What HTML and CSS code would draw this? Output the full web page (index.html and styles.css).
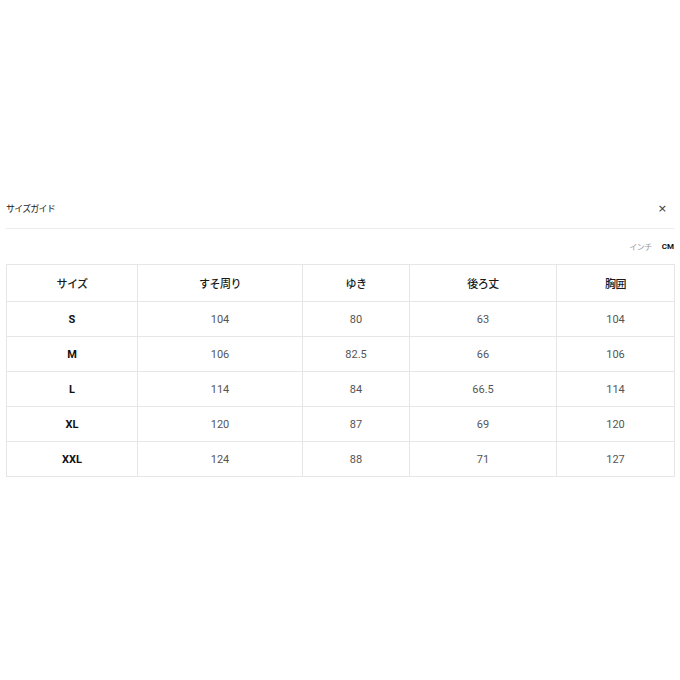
FILE: index.html
```html
<!DOCTYPE html>
<html lang="ja">
<head>
<meta charset="utf-8">
<link rel="stylesheet" href="styles.css">
</head>
<body>
<div class="guide">
  <div class="head">
    <span class="title">サイズガイド</span>
    <span class="close">×</span>
  </div>
  <div class="units">
    <span class="unit">インチ</span>
    <span class="unit active">CM</span>
  </div>
  <table class="sizes">
    <colgroup>
      <col class="c1"><col class="c2"><col class="c3"><col class="c4"><col class="c5">
    </colgroup>
    <thead>
      <tr><th>サイズ</th><th>すそ周り</th><th>ゆき</th><th>後ろ丈</th><th>胸囲</th></tr>
    </thead>
    <tbody>
      <tr><td class="sz">S</td><td>104</td><td>80</td><td>63</td><td>104</td></tr>
      <tr><td class="sz">M</td><td>106</td><td>82.5</td><td>66</td><td>106</td></tr>
      <tr><td class="sz">L</td><td>114</td><td>84</td><td>66.5</td><td>114</td></tr>
      <tr><td class="sz">XL</td><td>120</td><td>87</td><td>69</td><td>120</td></tr>
      <tr><td class="sz">XXL</td><td>124</td><td>88</td><td>71</td><td>127</td></tr>
    </tbody>
  </table>
</div>
</body>
</html>
```

FILE: styles.css
```css
html, body {
  margin: 0;
  padding: 0;
  background: #fff;
}
body {
  font-family: Roboto, "Noto Sans CJK JP", sans-serif;
  color: #222;
}
.guide {
  padding: 198px 6px 0 6px;
}
.head {
  display: flex;
  justify-content: space-between;
  align-items: center;
  height: 20px;
  padding-bottom: 10px;
  border-bottom: 1px solid #ececec;
}
.title {
  font-family: "Noto Sans CJK JP", sans-serif;
  font-size: 9px;
  letter-spacing: -0.8px;
  color: #222;
}
.close {
  font-family: "DejaVu Sans", sans-serif;
  font-size: 11px;
  color: #333;
  margin-right: 7px;
}
.units {
  display: flex;
  justify-content: flex-end;
  align-items: center;
  gap: 10px;
  height: 12px;
  margin-top: 11px;
  margin-bottom: 12px;
}
.unit {
  font-family: "Noto Sans CJK JP", sans-serif;
  font-size: 8px;
  color: #999;
  letter-spacing: -0.5px;
}
.unit.active {
  font-family: Roboto, sans-serif;
  font-weight: 700;
  color: #111;
  letter-spacing: 0;
}
.sizes {
  width: 668px;
  border-collapse: collapse;
  table-layout: fixed;
}
.c1 { width: 131px; }
.c2 { width: 165px; }
.c3 { width: 107px; }
.c4 { width: 147px; }
.c5 { width: 118px; }
.sizes th, .sizes td {
  border: 1px solid #e6e6e6;
  text-align: center;
  padding: 0;
}
.sizes th {
  height: 36px;
  font-family: "Noto Sans CJK JP", sans-serif;
  font-size: 11px;
  font-weight: 500;
  letter-spacing: -0.5px;
  color: #1a1a1a;
}
.sizes td {
  height: 34px;
  font-size: 11px;
  color: #555;
}
.sizes td.sz {
  font-weight: 700;
  color: #111;
}
```
